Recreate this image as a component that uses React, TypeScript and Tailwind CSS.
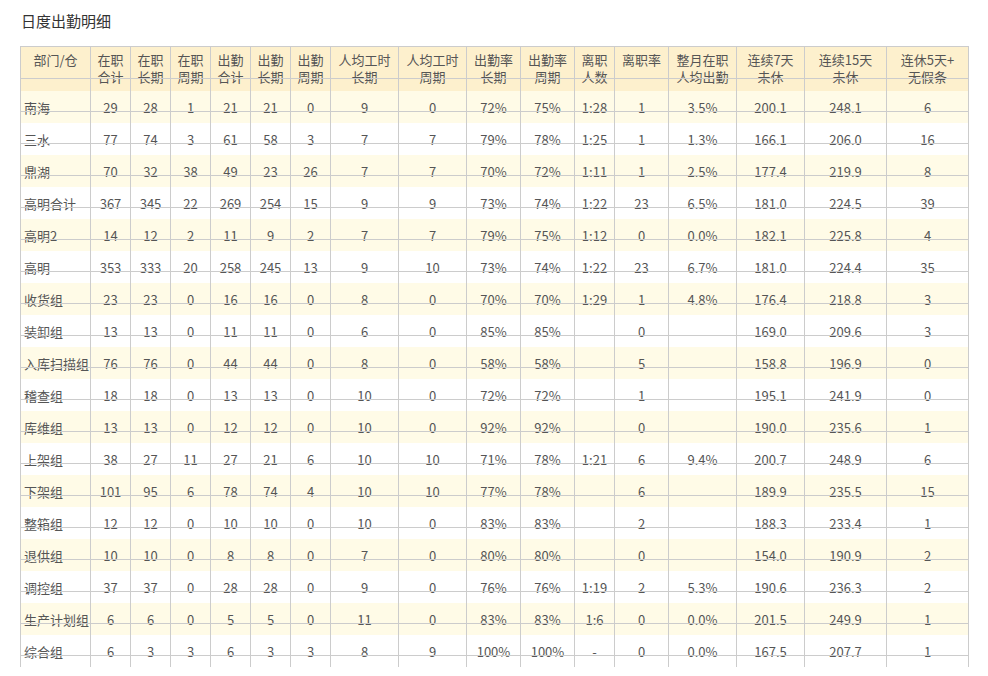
type Row = [string, ...string[]]

const columns = [
  '部门/仓',
  '在职\n合计',
  '在职\n长期',
  '在职\n周期',
  '出勤\n合计',
  '出勤\n长期',
  '出勤\n周期',
  '人均工时\n长期',
  '人均工时\n周期',
  '出勤率\n长期',
  '出勤率\n周期',
  '离职\n人数',
  '离职率',
  '整月在职\n人均出勤',
  '连续7天\n未休',
  '连续15天\n未休',
  '连休5天+\n无假条',
]

const rows: Row[] = [
  ['南海', '29', '28', '1', '21', '21', '0', '9', '0', '72%', '75%', '1:28', '1', '3.5%', '200.1', '248.1', '6'],
  ['三水', '77', '74', '3', '61', '58', '3', '7', '7', '79%', '78%', '1:25', '1', '1.3%', '166.1', '206.0', '16'],
  ['鼎湖', '70', '32', '38', '49', '23', '26', '7', '7', '70%', '72%', '1:11', '1', '2.5%', '177.4', '219.9', '8'],
  ['高明合计', '367', '345', '22', '269', '254', '15', '9', '9', '73%', '74%', '1:22', '23', '6.5%', '181.0', '224.5', '39'],
  ['高明2', '14', '12', '2', '11', '9', '2', '7', '7', '79%', '75%', '1:12', '0', '0.0%', '182.1', '225.8', '4'],
  ['高明', '353', '333', '20', '258', '245', '13', '9', '10', '73%', '74%', '1:22', '23', '6.7%', '181.0', '224.4', '35'],
  ['收货组', '23', '23', '0', '16', '16', '0', '8', '0', '70%', '70%', '1:29', '1', '4.8%', '176.4', '218.8', '3'],
  ['装卸组', '13', '13', '0', '11', '11', '0', '6', '0', '85%', '85%', '', '0', '', '169.0', '209.6', '3'],
  ['入库扫描组', '76', '76', '0', '44', '44', '0', '8', '0', '58%', '58%', '', '5', '', '158.8', '196.9', '0'],
  ['稽查组', '18', '18', '0', '13', '13', '0', '10', '0', '72%', '72%', '', '1', '', '195.1', '241.9', '0'],
  ['库维组', '13', '13', '0', '12', '12', '0', '10', '0', '92%', '92%', '', '0', '', '190.0', '235.6', '1'],
  ['上架组', '38', '27', '11', '27', '21', '6', '10', '10', '71%', '78%', '1:21', '6', '9.4%', '200.7', '248.9', '6'],
  ['下架组', '101', '95', '6', '78', '74', '4', '10', '10', '77%', '78%', '', '6', '', '189.9', '235.5', '15'],
  ['整箱组', '12', '12', '0', '10', '10', '0', '10', '0', '83%', '83%', '', '2', '', '188.3', '233.4', '1'],
  ['退供组', '10', '10', '0', '8', '8', '0', '7', '0', '80%', '80%', '', '0', '', '154.0', '190.9', '2'],
  ['调控组', '37', '37', '0', '28', '28', '0', '9', '0', '76%', '76%', '1:19', '2', '5.3%', '190.6', '236.3', '2'],
  ['生产计划组', '6', '6', '0', '5', '5', '0', '11', '0', '83%', '83%', '1:6', '0', '0.0%', '201.5', '249.9', '1'],
  ['综合组', '6', '3', '3', '6', '3', '3', '8', '9', '100%', '100%', '-', '0', '0.0%', '167.5', '207.7', '1'],
]

const gridCols =
  'grid grid-cols-[70px_40px_40px_40px_40px_40px_40px_68px_68px_54px_54px_40px_54px_68px_68px_82px_82px]'

export default function App() {
  return (
    <div
      className="min-h-screen bg-white px-[20px] pt-[11px] text-[#555]"
      style={{ fontFamily: '"Noto Sans CJK SC", "Noto Sans", sans-serif' }}
    >
      <h2 className="text-[15px] leading-[20px] pl-px text-[#333]">日度出勤明细</h2>

      <div className="mt-[15px] w-[949px] border-l border-t border-[#cccccc] text-[13px]">
        {/* Header */}
        <div className={`${gridCols} relative h-[44px] bg-[#fdf0cd]`}>
          {columns.map((c) => (
            <div
              key={c}
              className="border-r border-[#cccccc] pt-[4px] text-center leading-[17px] whitespace-pre"
            >
              {c}
            </div>
          ))}
          <div className="absolute left-0 right-0 top-[31px] h-px bg-[#cccccc]" />
        </div>

        {/* Body */}
        {rows.map((r, i) => (
          <div
            key={r[0]}
            className={`${gridCols} relative h-8 ${i % 2 === 0 ? 'bg-[#fffbe7]' : 'bg-white'}`}
          >
            {r.map((v, j) => (
              <div
                key={j}
                className={`flex items-center border-r border-[#cccccc] whitespace-nowrap leading-none ${
                  j === 0 ? 'justify-start pl-[3px]' : 'justify-center'
                }`}
              >
                {v}
              </div>
            ))}
            <div className="absolute left-0 right-0 top-[20px] h-px bg-[#cccccc]" />
          </div>
        ))}
      </div>
    </div>
  )
}
